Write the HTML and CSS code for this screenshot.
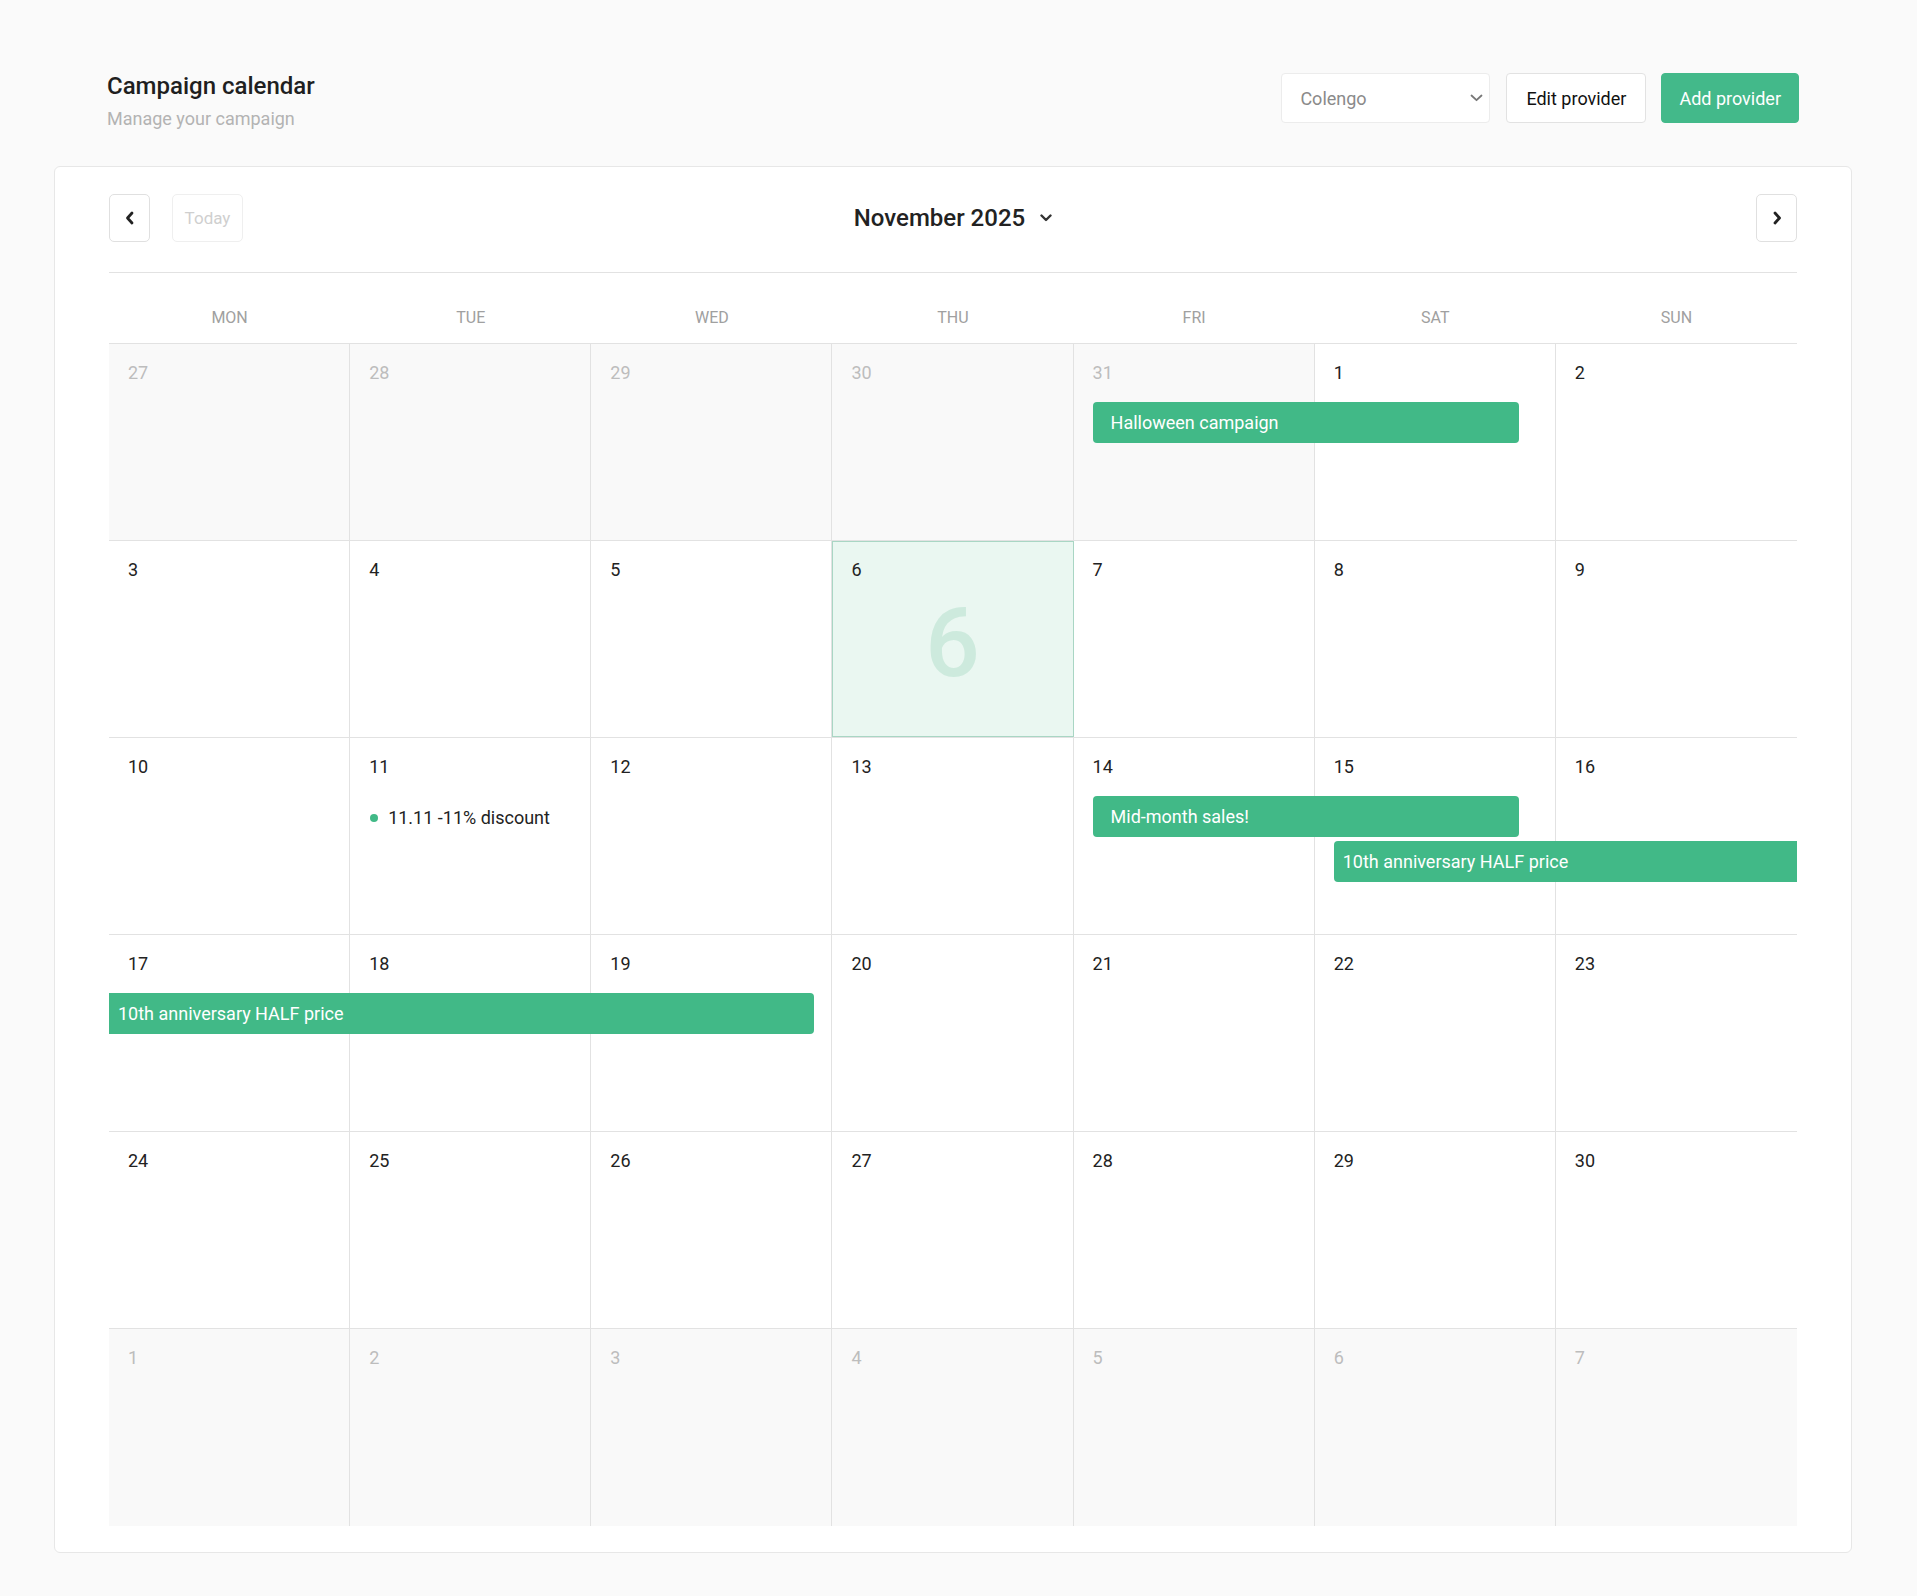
FILE: index.html
```html
<!DOCTYPE html>
<html lang="en">
<head>
    <meta charset="UTF-8">
    <meta name="viewport" content="width=device-width, initial-scale=1.0">
    <title>Campaign calendar</title>
    <link rel="stylesheet" href="styles.css">
</head>
<body>
    <div class="page-header">
        <div>
            <h1>Campaign calendar</h1>
            <p class="subtitle">Manage your campaign</p>
        </div>
        <div class="header-actions">
            <div class="select">
                <span>Colengo</span>
                <svg width="13" height="8" viewBox="0 0 13 8"><path d="M1.5 1.5 L6.5 6.2 L11.5 1.5" fill="none" stroke="#777" stroke-width="1.8" stroke-linecap="round" stroke-linejoin="round"/></svg>
            </div>
            <button class="btn">Edit provider</button>
            <button class="btn primary">Add provider</button>
        </div>
    </div>

    <div class="card">
        <!-- month navigation -->
        <div class="cal-nav">
            <div class="nav-left">
                <button class="icon-btn">
                    <svg width="10" height="14" viewBox="0 0 10 14"><path d="M7 2 L2.5 7 L7 12" fill="none" stroke="#222" stroke-width="2.8" stroke-linecap="round" stroke-linejoin="round"/></svg>
                </button>
                <button class="today-btn">Today</button>
            </div>
            <div class="month-title">
                <span>November 2025</span>
                <svg width="12" height="8" viewBox="0 0 12 8"><path d="M1.5 1.5 L6 6 L10.5 1.5" fill="none" stroke="#333" stroke-width="2.4" stroke-linecap="round" stroke-linejoin="round"/></svg>
            </div>
            <div class="nav-right">
                <button class="icon-btn">
                    <svg width="10" height="14" viewBox="0 0 10 14"><path d="M3 2 L7.5 7 L3 12" fill="none" stroke="#222" stroke-width="2.8" stroke-linecap="round" stroke-linejoin="round"/></svg>
                </button>
            </div>
        </div>

        <div class="weekdays">
            <div>MON</div><div>TUE</div><div>WED</div><div>THU</div><div>FRI</div><div>SAT</div><div>SUN</div>
        </div>

        <div class="week">
            <div class="day other">27</div>
            <div class="day other">28</div>
            <div class="day other">29</div>
            <div class="day other">30</div>
            <div class="day other">31</div>
            <div class="day">1</div>
            <div class="day">2</div>
            <div class="event ev-short">Halloween campaign</div>
        </div>

        <div class="week">
            <div class="day">3</div>
            <div class="day">4</div>
            <div class="day">5</div>
            <div class="day today">6<span class="watermark">6</span></div>
            <div class="day">7</div>
            <div class="day">8</div>
            <div class="day">9</div>
        </div>

        <div class="week">
            <div class="day">10</div>
            <div class="day">11</div>
            <div class="day">12</div>
            <div class="day">13</div>
            <div class="day">14</div>
            <div class="day">15</div>
            <div class="day">16</div>
            <div class="dot-event"><span class="dot"></span>11.11 -11% discount</div>
            <div class="event ev-short">Mid-month sales!</div>
            <div class="event ev-start">10th anniversary HALF price</div>
        </div>

        <div class="week">
            <div class="day">17</div>
            <div class="day">18</div>
            <div class="day">19</div>
            <div class="day">20</div>
            <div class="day">21</div>
            <div class="day">22</div>
            <div class="day">23</div>
            <div class="event ev-end">10th anniversary HALF price</div>
        </div>

        <div class="week">
            <div class="day">24</div>
            <div class="day">25</div>
            <div class="day">26</div>
            <div class="day">27</div>
            <div class="day">28</div>
            <div class="day">29</div>
            <div class="day">30</div>
        </div>

        <div class="week">
            <div class="day other">1</div>
            <div class="day other">2</div>
            <div class="day other">3</div>
            <div class="day other">4</div>
            <div class="day other">5</div>
            <div class="day other">6</div>
            <div class="day other">7</div>
        </div>
    </div>
</body>
</html>
```

FILE: styles.css
```css
body {
    margin: 0;
    background-color: #fafafa;
    font-family: Roboto, "Liberation Sans", sans-serif;
    color: #222;
}
.page-header {
    display: flex;
    justify-content: space-between;
    align-items: flex-start;
    padding: 72px 118px 0 107px;
}
h1 {
    margin: 0;
    font-size: 24px;
    line-height: 28px;
    font-weight: 500;
    color: #1f1f1f;
}
.subtitle {
    margin: 8px 0 0;
    font-size: 18px;
    line-height: 22px;
    color: #b3b3b3;
}
.header-actions {
    display: flex;
    gap: 15px;
    padding-top: 1px;
}
.select {
    width: 209px;
    height: 50px;
    box-sizing: border-box;
    margin-right: 1px;
    padding: 0 6px 0 18px;
    display: flex;
    align-items: center;
    justify-content: space-between;
    background: #fff;
    border: 1px solid #ececec;
    border-radius: 4px;
    font-size: 18px;
    color: #8a8a8a;
}
.btn {
    height: 50px;
    padding: 0 19px;
    background: #fff;
    border: 1px solid #e2e2e2;
    border-radius: 4px;
    font-family: inherit;
    font-size: 18px;
    color: #111;
}
.btn.primary {
    padding: 0 17px;
    background: #43b98a;
    border-color: #43b98a;
    color: #fff;
}
.card {
    margin: 36px 65px 45px 54px;
    padding: 27px 54px 26px;
    background: #fff;
    border: 1px solid #e7e7e7;
    border-radius: 6px;
}
.cal-nav {
    display: grid;
    grid-template-columns: 1fr auto 1fr;
    align-items: center;
    padding-bottom: 30px;
    border-bottom: 1px solid #e2e2e2;
}
.nav-left {
    display: flex;
    gap: 22px;
}
.nav-right {
    display: flex;
    justify-content: flex-end;
}
.icon-btn {
    width: 41px;
    height: 48px;
    padding: 0;
    display: flex;
    align-items: center;
    justify-content: center;
    background: #fff;
    border: 1px solid #e0e0e0;
    border-radius: 5px;
}
.today-btn {
    width: 71px;
    height: 48px;
    padding: 0;
    background: #fff;
    border: 1px solid #efefef;
    border-radius: 5px;
    font-family: inherit;
    font-size: 17px;
    color: #cfcfcf;
}
.month-title {
    display: flex;
    align-items: center;
    gap: 15px;
    font-size: 24px;
    font-weight: 500;
    color: #222;
}
.weekdays {
    display: grid;
    grid-template-columns: repeat(7, minmax(0, 1fr));
    padding: 35px 0 15px;
    border-bottom: 1px solid #e2e2e2;
    font-size: 16px;
    line-height: 20px;
    color: #a0a0a0;
    text-align: center;
}
.week {
    display: grid;
    grid-template-columns: repeat(7, minmax(0, 1fr));
    grid-template-rows: 58px 41px 4px 41px 1fr;
    height: 197px;
    box-sizing: border-box;
    border-bottom: 1px solid #e2e2e2;
}
.week:last-child {
    border-bottom: none;
}
.day {
    grid-row: 1 / -1;
    padding: 19px 19px 0;
    border-right: 1px solid #e2e2e2;
    font-size: 18px;
    line-height: 20px;
}
.day:nth-child(1) { grid-column: 1; }
.day:nth-child(2) { grid-column: 2; }
.day:nth-child(3) { grid-column: 3; }
.day:nth-child(4) { grid-column: 4; }
.day:nth-child(5) { grid-column: 5; }
.day:nth-child(6) { grid-column: 6; }
.day:nth-child(7) {
    grid-column: 7;
    border-right: none;
}
.day.other {
    background: #f9f9f9;
    color: #bdbdbd;
}
.day.today {
    position: relative;
    background: #eaf7f1;
    outline: 1px solid #a9d6c4;
    outline-offset: -1px;
}
.watermark {
    position: absolute;
    inset: 8px 0 0 0;
    display: flex;
    align-items: center;
    justify-content: center;
    font-size: 96px;
    line-height: 1;
    font-weight: 500;
    color: #cdeadd;
}
.event {
    position: relative;
    z-index: 1;
    display: flex;
    align-items: center;
    padding: 0 18px;
    background: #41b987;
    border-radius: 4px;
    color: #fff;
    font-size: 18px;
    white-space: nowrap;
    overflow: hidden;
}
.ev-short {
    grid-row: 2;
    grid-column: 5 / span 2;
    margin: 0 37px 0 19px;
}
.ev-start {
    grid-row: 4;
    grid-column: 6 / span 2;
    margin-left: 19px;
    padding-left: 9px;
    border-radius: 4px 0 0 4px;
}
.ev-end {
    grid-row: 2;
    grid-column: 1 / span 3;
    margin-right: 18px;
    padding-left: 9px;
    border-radius: 0 4px 4px 0;
}
.dot-event {
    position: relative;
    z-index: 1;
    grid-row: 2;
    grid-column: 2;
    display: flex;
    align-items: center;
    gap: 10px;
    padding: 2px 0 0 20px;
    font-size: 18px;
    color: #222;
    white-space: nowrap;
}
.dot {
    width: 8px;
    height: 8px;
    border-radius: 50%;
    background: #41b987;
}
```
